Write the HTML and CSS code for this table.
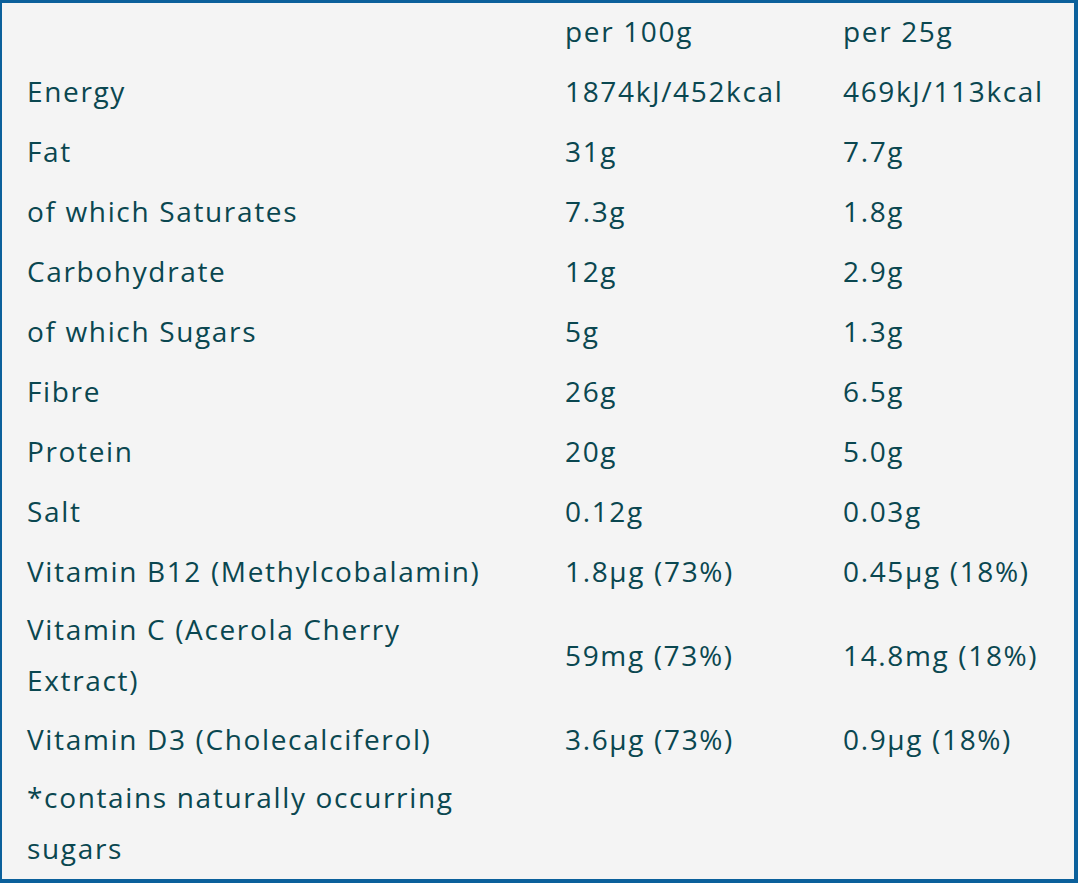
FILE: index.html
```html
<!DOCTYPE html>
<html lang="en">
<head>
    <meta charset="UTF-8">
    <meta name="viewport" content="width=device-width, initial-scale=1.0">
    <title>Nutrition</title>
    <link rel="stylesheet" href="styles.css">
</head>
<body>
    <div class="panel">
        <table class="nutrition">
            <colgroup>
                <col class="col-name">
                <col class="col-100">
                <col class="col-25">
            </colgroup>
            <thead>
                <tr>
                    <th></th>
                    <th>per 100g</th>
                    <th>per 25g</th>
                </tr>
            </thead>
            <tbody>
                <tr><td>Energy</td><td>1874kJ/452kcal</td><td>469kJ/113kcal</td></tr>
                <tr><td>Fat</td><td>31g</td><td>7.7g</td></tr>
                <tr><td>of which Saturates</td><td>7.3g</td><td>1.8g</td></tr>
                <tr><td>Carbohydrate</td><td>12g</td><td>2.9g</td></tr>
                <tr><td>of which Sugars</td><td>5g</td><td>1.3g</td></tr>
                <tr><td>Fibre</td><td>26g</td><td>6.5g</td></tr>
                <tr><td>Protein</td><td>20g</td><td>5.0g</td></tr>
                <tr><td>Salt</td><td>0.12g</td><td>0.03g</td></tr>
                <tr><td>Vitamin B12 (Methylcobalamin)</td><td>1.8μg (73%)</td><td>0.45μg (18%)</td></tr>
                <tr><td>Vitamin C (Acerola Cherry Extract)</td><td>59mg (73%)</td><td>14.8mg (18%)</td></tr>
                <tr><td>Vitamin D3 (Cholecalciferol)</td><td>3.6μg (73%)</td><td>0.9μg (18%)</td></tr>
                <tr><td>*contains naturally occurring sugars</td><td></td><td></td></tr>
            </tbody>
        </table>
    </div>
</body>
</html>
```

FILE: styles.css
```css
body {
    margin: 0;
    background: #fff;
    font-family: 'Open Sans', sans-serif;
}

.panel {
    width: 1072px;
    background: #f4f4f4;
    border-style: solid;
    border-color: #0b609b;
    border-width: 3px 4px 4px 2px;
}

.nutrition {
    width: 100%;
    border-collapse: collapse;
    table-layout: fixed;
    color: #0a4750;
    font-size: 28px;
    letter-spacing: 1.65px;
}

.col-name {
    width: 538px;
}

.col-100 {
    width: 278px;
}

.nutrition th,
.nutrition td {
    height: 54px;
    padding: 1px 25px 5px;
    line-height: 51px;
    text-align: left;
    font-weight: normal;
    vertical-align: middle;
}

.nutrition td:first-child {
    padding-right: 40px;
}
```
